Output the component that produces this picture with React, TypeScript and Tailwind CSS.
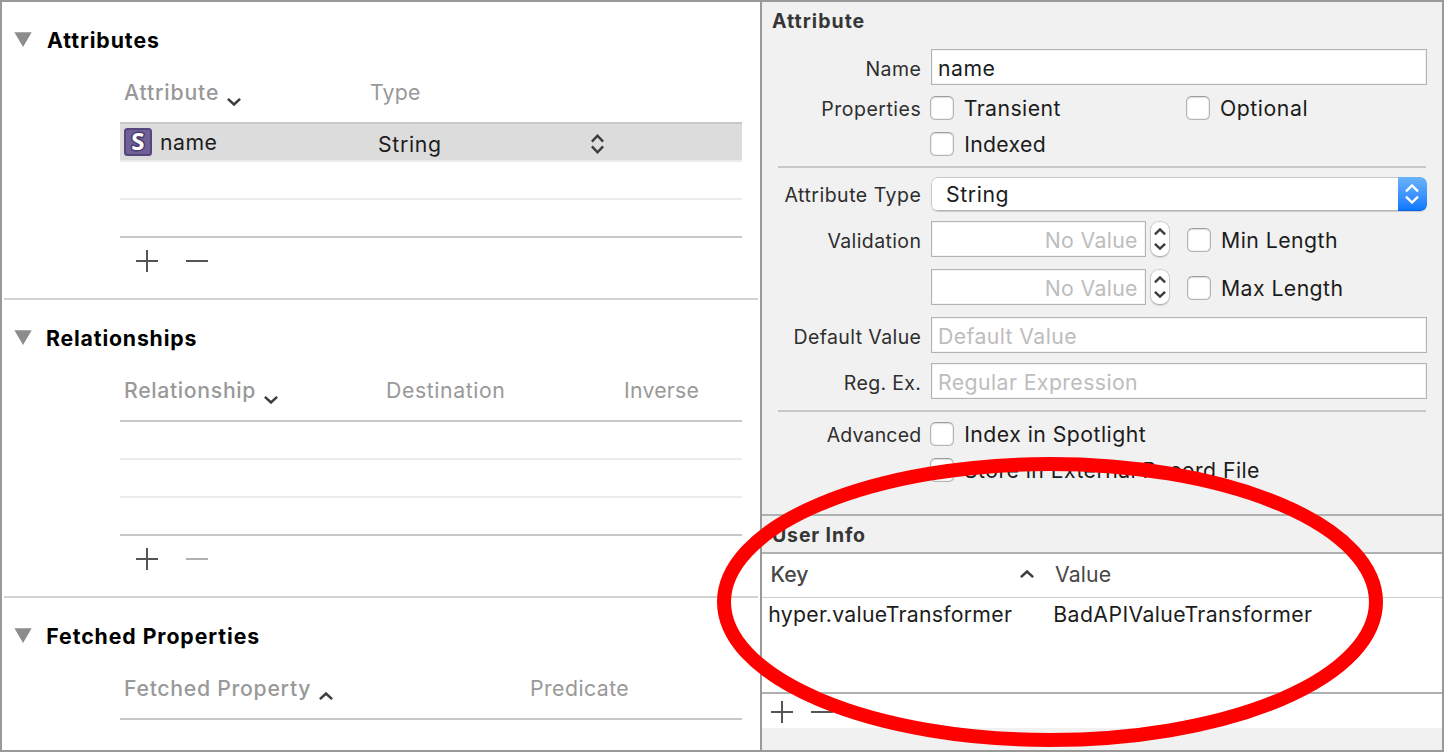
import React from "react";
import clsx from "clsx";

type TextProps = { children: React.ReactNode; className?: string };

const Body = ({ children, className }: TextProps) => (
  <span className={clsx("block text-[21.25px] leading-6 whitespace-pre", className)}>{children}</span>
);

const Chevron = ({ up, className }: { up?: boolean; className?: string }) => (
  <svg width="14" height="8" viewBox="0 0 14 8" className={clsx("shrink-0", className)}>
    <path
      d={up ? "M0.9 7.1L7 1.5L13.1 7.1" : "M0.9 0.9L7 6.5L13.1 0.9"}
      fill="none"
      stroke="#3d3d3d"
      strokeWidth="2.5"
    />
  </svg>
);

const UpDown = ({ className, d, viewBox, w, h }: { className?: string; d: string; viewBox: string; w: number; h: number }) => (
  <svg width={w} height={h} viewBox={viewBox} className={clsx("shrink-0", className)}>
    <path d={d} fill="none" stroke="currentColor" strokeWidth="2.4" />
  </svg>
);

const AddRemove = ({ gap, dim, className }: { gap: string; dim?: boolean; className?: string }) => (
  <div className={clsx("flex items-center", gap, className)}>
    <svg width="22" height="22" viewBox="0 0 22 22" shapeRendering="crispEdges" className="shrink-0">
      <path d="M0 10H22V12H0zM10 0H12V22H10z" fill="#555555" />
    </svg>
    <span className={clsx("h-0.5 w-[22px]", dim ? "bg-[#b0b0b0]" : "bg-[#555555]")} />
  </div>
);

const SectionTitle = ({ children, className }: TextProps) => (
  <div className="flex h-[76px] items-center pl-3">
    <svg width="18" height="15" viewBox="0 0 18 15" className="-mt-px shrink-0">
      <path d="M0.4 0.3H17.7L9.05 15z" fill="#8c8c8c" />
    </svg>
    <Body className={clsx("font-bold text-black", className)}>{children}</Body>
  </div>
);

const Columns = ({ children }: TextProps) => (
  <div className="ml-[118px] flex h-11 w-[622px] pt-0.5 pl-1 text-[#999999]">{children}</div>
);

const Rule = ({ className }: { className?: string }) => <div className={clsx("h-0.5 shrink-0", className)} />;

const LeftPanel = () => (
  <div className="flex w-[758px] shrink-0 flex-col bg-white">
    <section className="h-[298px] shrink-0">
      <SectionTitle className="ml-[15px] tracking-[0.94px]">Attributes</SectionTitle>
      <Columns>
        <div className="flex w-[246px]">
          <Body className="font-medium tracking-[0.84px]">Attribute</Body>
          <Chevron className="mt-[18px] ml-[7.5px]" />
        </div>
        <Body className="tracking-[0.22px]">Type</Body>
      </Columns>
      <div className="ml-[118px] w-[622px]">
        <Rule className="bg-[#c8c8c8]" />
        <div className="flex h-9 items-center bg-[#dcdcdc] pl-1 text-[#1c1c1c]">
          <svg width="28" height="28" viewBox="0 0 28 28" className="shrink-0 overflow-visible">
            <rect x="1" y="1" width="26" height="26" rx="2.5" fill="#706096" stroke="#54457e" strokeWidth="2" />
            <text
              x="13.8"
              y="22.4"
              textAnchor="middle"
              fill="#ffffff"
              stroke="#493c70"
              strokeWidth="3"
              strokeLinejoin="round"
              paintOrder="stroke"
              className="font-['Noto_Sans',sans-serif] text-[24px] font-bold"
            >
              S
            </text>
          </svg>
          <Body className="-mt-px ml-2 w-[218px] tracking-[0.47px]">name</Body>
          <Body className="mt-1 w-[213px] tracking-[0.7px]">String</Body>
          <UpDown
            className="mt-1 text-[#3d3d3d]"
            w={13}
            h={20}
            viewBox="0 0 13 20"
            d="M0.9 7.6L6.5 1.7L12.1 7.6M0.9 12.4L6.5 18.3L12.1 12.4"
          />
        </div>
        <Rule className="bg-[#ebebeb]" />
        <Rule className="mt-9 bg-[#ebebeb]" />
        <Rule className="mt-9 bg-[#c8c8c8]" />
        <AddRemove gap="gap-7" className="mt-3 ml-4" />
      </div>
      <Rule className="mx-0.5 mt-[26px] bg-[#d2d2d2]" />
    </section>

    <section className="h-[298px] shrink-0">
      <SectionTitle className="ml-[14px] tracking-[0.83px]">Relationships</SectionTitle>
      <Columns>
        <div className="flex w-[262px]">
          <Body className="font-medium tracking-[0.65px]">Relationship</Body>
          <Chevron className="mt-[18px] ml-[7.5px]" />
        </div>
        <Body className="w-[238px] tracking-[0.6px]">Destination</Body>
        <Body className="tracking-[0.24px]">Inverse</Body>
      </Columns>
      <div className="ml-[118px] w-[622px]">
        <Rule className="bg-[#c8c8c8]" />
        <Rule className="mt-9 bg-[#ebebeb]" />
        <Rule className="mt-9 bg-[#ebebeb]" />
        <Rule className="mt-9 bg-[#c8c8c8]" />
        <AddRemove gap="gap-7" dim className="mt-3 ml-4" />
      </div>
      <Rule className="mx-0.5 mt-[26px] bg-[#d2d2d2]" />
    </section>

    <section>
      <SectionTitle className="ml-[14.3px] tracking-[0.93px]">Fetched Properties</SectionTitle>
      <Columns>
        <div className="flex w-[406px]">
          <Body className="font-medium tracking-[0.7px]">Fetched Property</Body>
          <Chevron up className="mt-[16px] ml-2" />
        </div>
        <Body className="tracking-[0.44px]">Predicate</Body>
      </Columns>
      <Rule className="ml-[118px] w-[622px] bg-[#c8c8c8]" />
    </section>
  </div>
);

const Label = ({ children, className }: TextProps) => (
  <span
    className={clsx(
      "w-[160px] shrink-0 pr-[0.7px] text-right text-[19.5px] leading-6 whitespace-pre text-[#2e2e2e]",
      className,
    )}
  >
    {children}
  </span>
);

const Field = ({ children, className }: TextProps) => (
  <div
    className={clsx(
      "ml-[9px] flex h-9 items-center border border-[#b3b3b3] bg-white px-1.5 pt-0.5 shadow-[inset_0_0_0_1px_#f4f4f4]",
      className,
    )}
  >
    {children}
  </div>
);

const Checkbox = ({ className }: { className?: string }) => (
  <span
    className={clsx(
      "size-6 shrink-0 rounded-[5.5px] border border-[#b4b4b4] border-t-[#9c9c9c] bg-white shadow-[inset_0_1px_1px_#dedede,inset_0_0_1px_1px_#f0f0f0]",
      className,
    )}
  />
);

const Stepper = () => (
  <span className="ml-1 flex h-9 w-5 shrink-0 items-center justify-center rounded-[9px] border border-[#cbcbcb] border-b-[#b4b4b4] bg-white text-[#3d3d3d] shadow-[0_1px_1px_#00000022]">
    <UpDown w={12} h={24} viewBox="0 0 12 24" d="M0.9 7.4L6 2.5L11.1 7.4M0.9 16.8L6 21.7L11.1 16.8" />
  </span>
);

const RightPanel = () => (
  <div className="flex min-w-0 grow flex-col border-l-2 border-[#999999] bg-[#f1f1f1] text-[#1c1c1c]">
    <div className="flex h-[38px] items-center pt-0.5 pl-2.5 text-[19.5px] font-bold tracking-[1.03px] text-[#363636]">
      Attribute
    </div>
    <div className="mt-[9px] flex h-9 items-center">
      <Label className="mt-1 tracking-[0.43px]">Name</Label>
      <Field className="w-[496px]">
        <Body className="tracking-[0.47px]">name</Body>
      </Field>
    </div>
    <div className="mt-[11px] flex h-6 items-center">
      <Label className="mt-px tracking-[0.52px]">Properties</Label>
      <Checkbox className="ml-2" />
      <Body className="ml-[9.7px] w-[222.3px] tracking-[0.44px]">Transient</Body>
      <Checkbox />
      <Body className="ml-[10px] tracking-[0.55px]">Optional</Body>
    </div>
    <div className="mt-3 flex h-6 items-center pl-[168px]">
      <Checkbox />
      <Body className="ml-[10.2px] tracking-[0.3px]">Indexed</Body>
    </div>
    <Rule className="mx-4 mt-2.5 bg-[#c8c8c8]" />
    <div className="mt-[9px] flex h-[34px] items-center">
      <Label className="mt-px tracking-[0.5px]">Attribute Type</Label>
      <div className="ml-[9px] flex h-[34px] w-[496px] items-center justify-between overflow-hidden rounded-[6.5px] bg-white shadow-[0_1px_1px_#00000026]">
        <div className="flex h-full grow items-center rounded-l-[6.5px] border border-r-0 border-[#c8c8c8] border-b-[#b2b2b2] pl-[14px]">
          <Body className="tracking-[0.6px]">String</Body>
        </div>
        <div className="flex h-full w-[29px] items-center justify-center rounded-r-[6px] border-b border-[#0b62e0] bg-linear-to-b from-[#6bb3fa] to-[#0a78ff] text-white">
          <UpDown
            className="mt-px mr-px"
            w={14}
            h={20}
            viewBox="0 0 14 20"
            d="M1 7.4L7 1.5L13 7.4M1 12.6L7 18.5L13 12.6"
          />
        </div>
      </div>
    </div>
    <div className="mt-2.5 flex h-9 items-center">
      <Label className="mt-[3px] tracking-[0.38px]">Validation</Label>
      <Field className="w-[215px] justify-end text-[#bdbdbd]">
        <Body className="mr-[1.2px] tracking-[0.34px]">No Value</Body>
      </Field>
      <Stepper />
      <Checkbox className="mt-0.5 ml-[17px]" />
      <Body className="mt-0.5 ml-2.5 tracking-[0.46px]">Min Length</Body>
    </div>
    <div className="mt-3 flex h-9 items-center pl-[160px]">
      <Field className="w-[215px] justify-end text-[#bdbdbd]">
        <Body className="mr-[1.2px] tracking-[0.34px]">No Value</Body>
      </Field>
      <Stepper />
      <Checkbox className="mt-0.5 ml-[17px]" />
      <Body className="mt-0.5 ml-2.5 tracking-[0.42px]">Max Length</Body>
    </div>
    <div className="mt-3 flex h-9 items-center">
      <Label className="mt-[3px] tracking-[0.39px]">Default Value</Label>
      <Field className="w-[496px] text-[#bdbdbd]">
        <Body className="tracking-[0.4px]">Default Value</Body>
      </Field>
    </div>
    <div className="mt-2.5 flex h-9 items-center">
      <Label className="mt-[3px] tracking-[0.35px]">Reg. Ex.</Label>
      <Field className="w-[496px] text-[#bdbdbd]">
        <Body className="tracking-[0.41px]">Regular Expression</Body>
      </Field>
    </div>
    <Rule className="mx-4 mt-[11px] bg-[#c8c8c8]" />
    <div className="mt-2.5 flex h-6 items-center">
      <Label className="mt-px tracking-[0.17px]">Advanced</Label>
      <Checkbox className="ml-2" />
      <Body className="ml-[10.2px] tracking-[0.46px]">Index in Spotlight</Body>
    </div>
    <div className="mt-3 flex h-6 items-center pl-[168px]">
      <Checkbox />
      <Body className="ml-2.5 tracking-[0.44px]">Store in External Record File</Body>
    </div>
    <Rule className="mt-8 bg-[#b0b0b0]" />
    <div className="flex h-9 shrink-0 items-center pt-[3px] pl-2.5 text-[19.5px] font-bold tracking-[0.85px] text-[#363636]">
      User Info
    </div>
    <Rule className="bg-[#b0b0b0]" />
    <div className="flex h-11 shrink-0 items-center border-b border-[#cfcfcf] bg-white pb-[3px] pl-[8.5px] text-[#484848]">
      <Body className="w-[249.5px] font-medium">Key</Body>
      <Chevron up />
      <Body className="ml-[21px] tracking-[0.1px]">Value</Body>
    </div>
    <div className="h-[94px] shrink-0 bg-white">
      <div className="flex h-8 items-center pl-[6.3px]">
        <Body className="w-[285px] tracking-[0.26px]">hyper.valueTransformer</Body>
        <Body className="tracking-[0.4px]">BadAPIValueTransformer</Body>
      </div>
    </div>
    <Rule className="bg-[#b0b0b0]" />
    <AddRemove gap="gap-[18px]" className="h-[34px] shrink-0 bg-white pt-0.5 pl-[9px]" />
  </div>
);

export default function App() {
  return (
    <div className="relative flex h-[752px] w-[1444px] overflow-hidden border-2 border-[#999999] bg-white font-[Inter,sans-serif]">
      <LeftPanel />
      <RightPanel />
      <svg width="668" height="292" viewBox="0 0 668 292" className="pointer-events-none absolute top-[454px] left-[714px]">
        <ellipse cx="334" cy="146" rx="326" ry="138" fill="none" stroke="#ff0000" strokeWidth="14" />
      </svg>
    </div>
  );
}
